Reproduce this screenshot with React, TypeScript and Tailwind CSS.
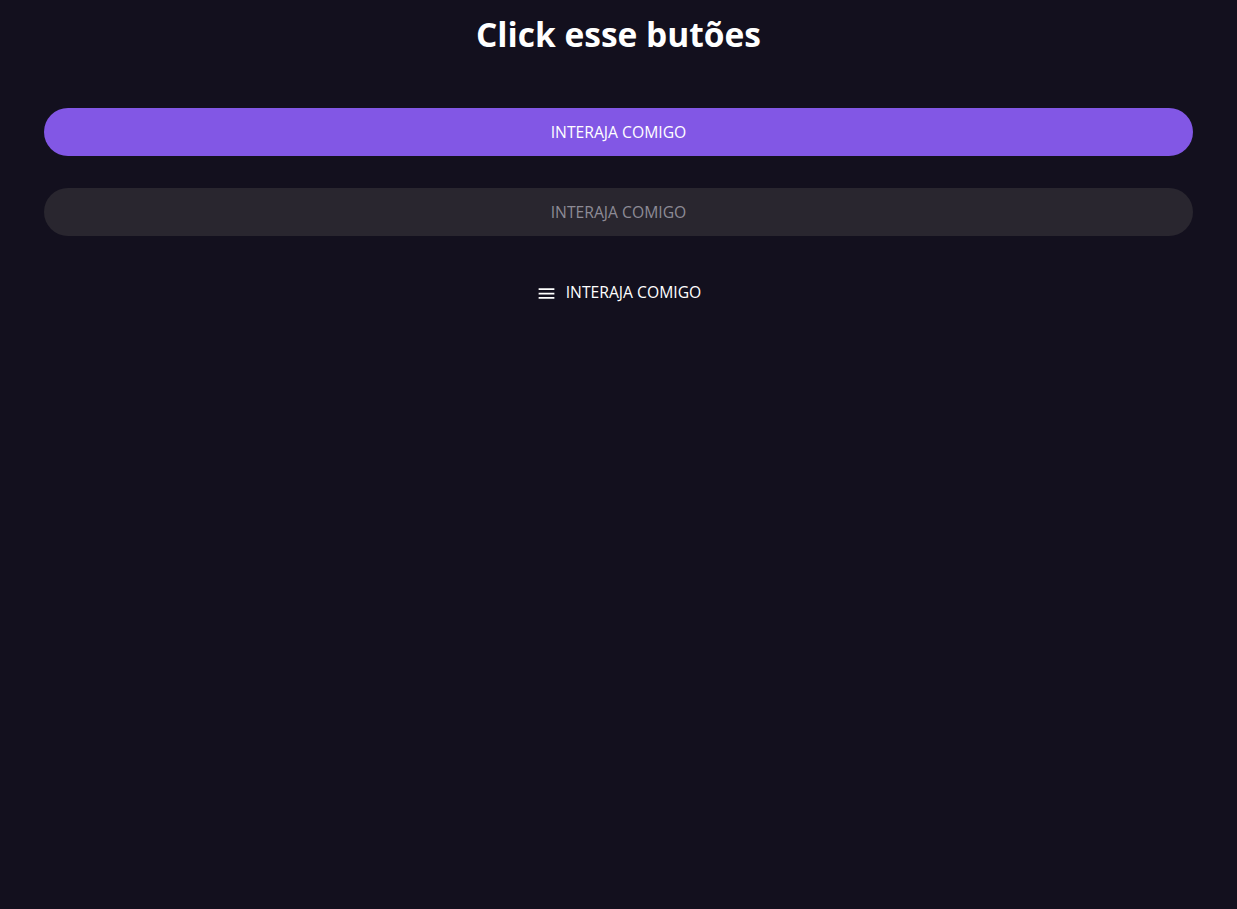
export default function App() {
  return (
    <div
      className="min-h-screen bg-[#13101e] px-11 text-white"
      style={{ fontFamily: '"Open Sans", "Noto Sans", sans-serif' }}
    >
      <h1 className="pt-[11px] text-center text-[33.5px] font-bold leading-[46px]">Click esse butões</h1>

      <div className="mt-[51px] flex flex-col gap-8">
        <button className="h-12 w-full rounded-full bg-[#8257e5] pt-0.5 text-[15.7px] uppercase text-white">
          Interaja comigo
        </button>
        <button className="h-12 w-full rounded-full bg-[#29262f] pt-0.5 text-[15.7px] uppercase text-[#8d8b96]">
          Interaja comigo
        </button>
        <button className="flex h-12 w-full items-center justify-center gap-[9px] pt-0.5 text-[15.7px] uppercase text-white">
          <svg width="21" height="21" viewBox="0 0 24 24" fill="currentColor">
            <path d="M3 18h18v-2H3v2zm0-5h18v-2H3v2zm0-7v2h18V6H3z" />
          </svg>
          Interaja comigo
        </button>
      </div>
    </div>
  );
}
